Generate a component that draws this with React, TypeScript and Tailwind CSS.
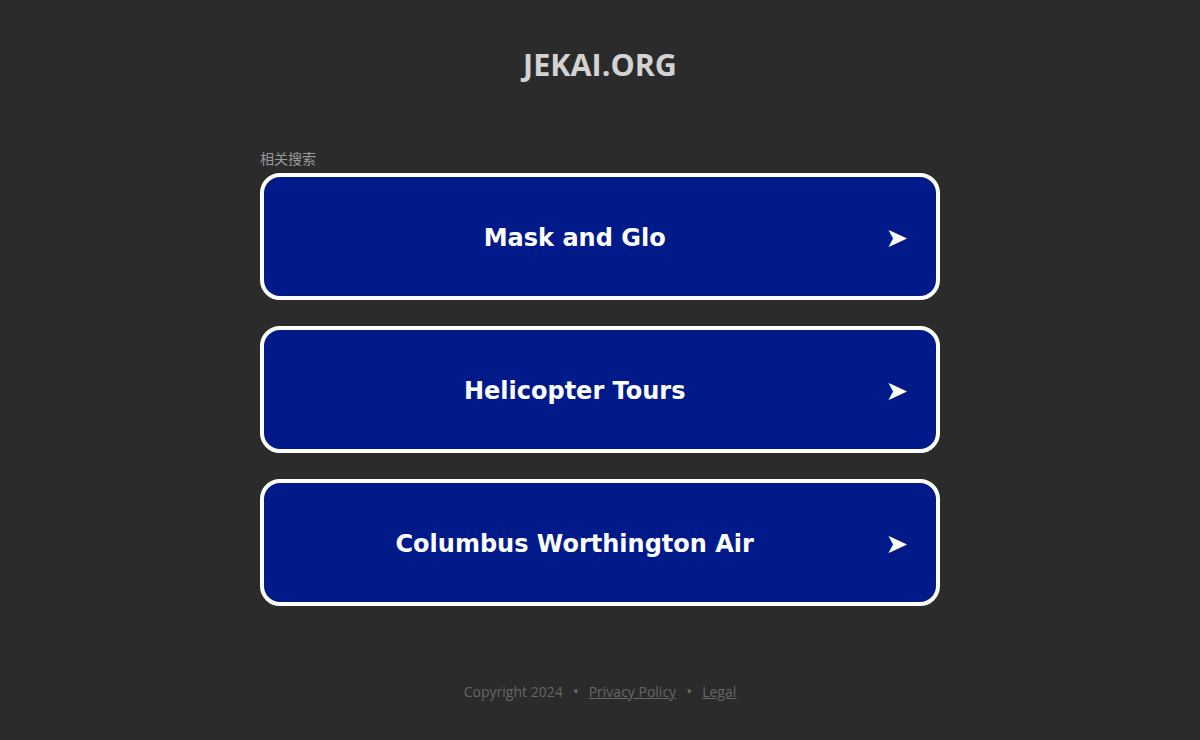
import React from "react";

const items = ["Mask and Glo", "Helicopter Tours", "Columbus Worthington Air"];

export default function App() {
  return (
    <div className="min-h-[740px] w-full bg-[#2b2b2b] flex flex-col items-center">
      <h1
        className="mt-[45px] h-[38px] text-[30.5px] leading-[38px] font-bold text-[#d3d3d3]"
        style={{ fontFamily: '"Open Sans", "Noto Sans", sans-serif' }}
      >
        JEKAI.ORG
      </h1>
      <div className="mt-[67px] w-[680px] flex flex-col">
        <div
          className="text-[14px] leading-[18px] text-[#9a9a9a]"
          style={{ fontFamily: '"Open Sans", "Noto Sans CJK SC", sans-serif' }}
        >
          相关搜索
        </div>
        <div className="mt-[5px] flex flex-col gap-[26px]">
          {items.map((t) => (
            <a
              key={t}
              href="#"
              className="flex h-[127px] items-center rounded-[20px] border-4 border-white bg-[#001a8a] text-white"
            >
              <span
                className="flex-1 pt-[3px] text-center text-[24px] font-bold"
                style={{ fontFamily: '"DejaVu Sans", Verdana, sans-serif' }}
              >
                {t}
              </span>
              <span
                className="mr-[28px] pt-[2px] text-[27px] leading-none"
                style={{ fontFamily: '"DejaVu Sans", sans-serif' }}
              >
                ➤
              </span>
            </a>
          ))}
        </div>
      </div>
      <div
        className="mt-[73px] flex items-center gap-[10px] text-[14px] text-[#666]"
        style={{ fontFamily: '"Open Sans", "Noto Sans", sans-serif' }}
      >
        <span>Copyright 2024</span>
        <span className="text-[16px]">•</span>
        <a href="#" className="underline">Privacy Policy</a>
        <span className="text-[16px]">•</span>
        <a href="#" className="underline">Legal</a>
      </div>
    </div>
  );
}
